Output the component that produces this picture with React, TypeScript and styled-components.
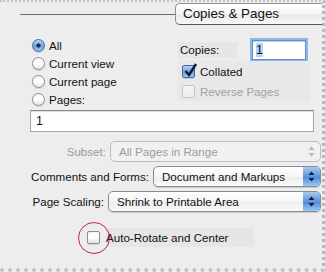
import { FC } from 'react'
import { styled, createGlobalStyle } from 'styled-components'

const GlobalStyle = createGlobalStyle`
  body {
    margin: 0;
    background: #ededed;
    font-family: "Liberation Sans", Arial, sans-serif;
  }
`

const Panel = styled.div`
  position: relative;
  box-sizing: border-box;
  width: 325px;
  height: 272px;
  background: #ededed;
  border-top: 2px dotted #c4c4c4;
  border-right: 3px dotted #b8b8b8;
  border-bottom: 4px dotted #c0c0c0;
  padding-top: 1px;
  font-size: 11.6px;
  color: #111;
`

const Header = styled.div`
  display: flex;
  align-items: center;
  height: 22px;
`

const Rule = styled.div`
  flex: 1;
  height: 1px;
  margin-left: 20px;
  background: #6e6e6e;
`

const PanePopup = styled.div`
  box-sizing: border-box;
  width: 147px;
  height: 22px;
  border: 1px solid #8f8f8f;
  border-right: none;
  border-bottom-color: #555;
  border-radius: 5px 0 0 5px;
  background: linear-gradient(#ffffff, #f4f4f4 50%, #e9e9e9 51%, #f7f7f7);
  font-size: 13.4px;
  line-height: 20px;
  padding-left: 7px;
  color: #111;
`

const Top = styled.div`
  display: flex;
  margin-top: 11px;
  padding-left: 32px;
`

const RadioList = styled.div`
  display: flex;
  flex-direction: column;
  width: 146px;
`

const RadioRow = styled.div`
  display: flex;
  align-items: center;
  height: 18px;
  gap: 4px;
`

const RadioDot = styled.span<{ $on?: boolean }>`
  box-sizing: border-box;
  width: 13px;
  height: 13px;
  border-radius: 50%;
  border: 1px solid ${p => (p.$on ? '#3d6aa8' : '#8e8e8e')};
  background: ${p =>
    p.$on
      ? 'radial-gradient(circle at 50% 50%, #1b2c4a 0 1.8px, transparent 2.4px), linear-gradient(#b9d3f2, #6f9fdb 55%, #9cc4f3)'
      : 'linear-gradient(#f6f6f6, #ffffff 50%, #e6e6e6)'};
  box-shadow: 0 1px 1px rgba(0, 0, 0, 0.12);
`

const RightCol = styled.div`
  display: flex;
  flex-direction: column;
  width: 140px;
`

const CopiesRow = styled.div`
  display: flex;
  align-items: center;
  height: 22px;
  margin-top: 3px;
`

const CopiesLabel = styled.span`
  width: 57px;
  height: 16px;
  line-height: 16px;
  padding-left: 2px;
  background: #e6e6e6;
`

const CopiesInput = styled.div`
  box-sizing: border-box;
  width: 54px;
  height: 20px;
  margin-left: 15px;
  border: 1px solid #5d8fd3;
  box-shadow: 0 0 0 2px #8db6ea, inset 0 1px 1px rgba(0, 0, 0, 0.2);
  background: #fff;
  padding: 2px 3px;
  line-height: 14px;
  font-size: 12.5px;
`

const Selected = styled.span`
  background: #b5d2f7;
`

const CheckRow = styled.div<{ $off?: boolean }>`
  display: flex;
  align-items: center;
  gap: 5px;
  height: 20px;
  padding-left: 4px;
  width: 128px;
  background: #e8e8e8;
  color: ${p => (p.$off ? '#a2a2a2' : '#111')};
`

const Box = styled.span<{ $on?: boolean; $off?: boolean }>`
  position: relative;
  flex: none;
  box-sizing: border-box;
  width: 13px;
  height: 13px;
  border-radius: 2px;
  border: 1px solid ${p => (p.$on ? '#3d6aa8' : p.$off ? '#c6c6c6' : '#8e8e8e')};
  background: ${p =>
    p.$on
      ? 'linear-gradient(#b9d3f2, #6f9fdb 55%, #9cc4f3)'
      : p.$off
        ? 'linear-gradient(#f4f4f4, #ececec)'
        : 'linear-gradient(#f6f6f6, #ffffff 50%, #e4e4e4)'};
  box-shadow: ${p => (p.$off ? 'none' : '0 1px 1px rgba(0, 0, 0, 0.12)')};
`

const Tick = styled.svg`
  position: absolute;
  left: 0px;
  top: -4px;
`

const PagesField = styled.div`
  box-sizing: border-box;
  margin: 2px 8px 0 30px;
  height: 22px;
  border: 1px solid #a5a5a5;
  border-top-color: #8a8a8a;
  box-shadow: inset 0 1px 1px rgba(0, 0, 0, 0.15);
  background: #fff;
  padding: 3px 5px;
  line-height: 15px;
  font-size: 12.5px;
`

const Options = styled.div`
  display: flex;
  flex-direction: column;
  gap: 4px;
  margin-top: 9px;
`

const OptionRow = styled.div`
  display: flex;
  align-items: center;
  justify-content: flex-end;
  gap: 4px;
  padding-right: 1px;
`

const OptionLabel = styled.span<{ $off?: boolean }>`
  color: ${p => (p.$off ? '#9c9c9c' : '#111')};
`

const Select = styled.div<{ $w: number; $off?: boolean }>`
  position: relative;
  box-sizing: border-box;
  width: ${p => p.$w}px;
  height: 21px;
  border: 1px solid ${p => (p.$off ? '#bdbdbd' : '#8c8c8c')};
  border-radius: 5px;
  background: ${p =>
    p.$off ? '#f1f1f1' : 'linear-gradient(#ffffff, #f5f5f5 50%, #ececec 51%, #fafafa)'};
  box-shadow: ${p => (p.$off ? 'none' : '0 1px 1px rgba(0, 0, 0, 0.15)')};
  color: ${p => (p.$off ? '#9c9c9c' : '#111')};
  padding-left: 8px;
  line-height: 19px;
`

const Stepper = styled.span<{ $off?: boolean }>`
  position: absolute;
  right: 0;
  top: 0;
  bottom: 0;
  width: 17px;
  border-radius: 0 4px 4px 0;
  display: flex;
  align-items: center;
  justify-content: center;
  background: ${p =>
    p.$off ? 'transparent' : 'linear-gradient(#a9c8ef, #5e95db 50%, #4d88d6 51%, #9cc7f6)'};
`

const AutoRow = styled.div`
  position: relative;
  display: flex;
  align-items: center;
  gap: 6px;
  margin: 16px 0 0 87px;
`

const AutoLabel = styled.span`
  width: 148px;
  height: 19px;
  line-height: 19px;
  background: #e6e6e6;
`

const Highlight = styled.span`
  position: absolute;
  left: -9px;
  top: 50%;
  width: 30px;
  height: 30px;
  margin-top: -16px;
  border: 1.3px solid #cc1c6c;
  border-radius: 50%;
`

const Arrows: FC<{ off?: boolean }> = ({ off }) => (
  <svg width='7' height='11' viewBox='0 0 7 11'>
    <path d='M3.5 0.5 L6.5 4 L0.5 4 Z' fill={off ? '#b5b5b5' : '#0d1d3a'} />
    <path d='M3.5 10.5 L6.5 7 L0.5 7 Z' fill={off ? '#b5b5b5' : '#0d1d3a'} />
  </svg>
)

const radios = [
  { label: 'All', on: true },
  { label: 'Current view' },
  { label: 'Current page' },
  { label: 'Pages:' }
]

function App() {
  return (
    <>
      <GlobalStyle />
      <Panel>
        <Header>
          <Rule />
          <PanePopup>Copies &amp; Pages</PanePopup>
        </Header>
        <Top>
          <RadioList>
            {radios.map(r => (
              <RadioRow key={r.label}>
                <RadioDot $on={r.on} />
                {r.label}
              </RadioRow>
            ))}
          </RadioList>
          <RightCol>
            <CopiesRow>
              <CopiesLabel>Copies:</CopiesLabel>
              <CopiesInput>
                <Selected>1</Selected>
              </CopiesInput>
            </CopiesRow>
            <CheckRow>
              <Box $on>
                <Tick width='15' height='16' viewBox='0 0 15 16'>
                  <path d='M2.5 9 L6 13 L13 2' fill='none' stroke='#0e1a33' strokeWidth='2.4' />
                </Tick>
              </Box>
              Collated
            </CheckRow>
            <CheckRow $off>
              <Box $off />
              Reverse Pages
            </CheckRow>
          </RightCol>
        </Top>
        <PagesField>1</PagesField>
        <Options>
          <OptionRow>
            <OptionLabel $off>Subset:</OptionLabel>
            <Select $w={211} $off>
              All Pages in Range
              <Stepper $off>
                <Arrows off />
              </Stepper>
            </Select>
          </OptionRow>
          <OptionRow>
            <OptionLabel>Comments and Forms:</OptionLabel>
            <Select $w={168}>
              Document and Markups
              <Stepper>
                <Arrows />
              </Stepper>
            </Select>
          </OptionRow>
          <OptionRow>
            <OptionLabel>Page Scaling:</OptionLabel>
            <Select $w={213}>
              Shrink to Printable Area
              <Stepper>
                <Arrows />
              </Stepper>
            </Select>
          </OptionRow>
        </Options>
        <AutoRow>
          <Highlight />
          <Box />
          <AutoLabel>Auto-Rotate and Center</AutoLabel>
        </AutoRow>
      </Panel>
    </>
  )
}

export default App
